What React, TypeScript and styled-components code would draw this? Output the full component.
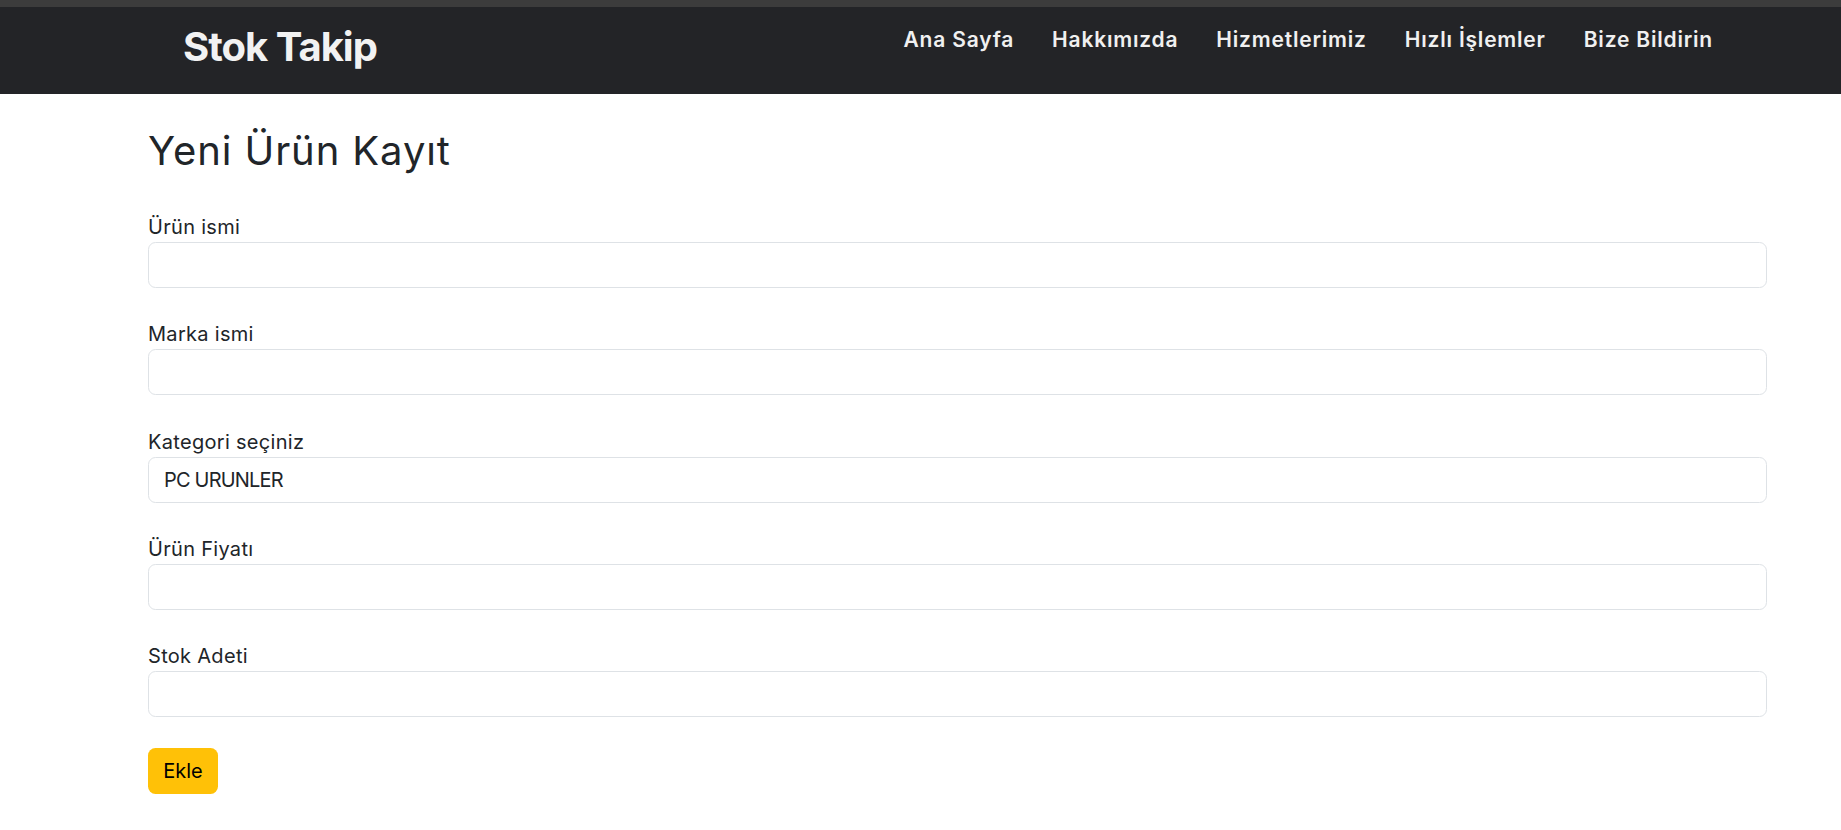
import React from 'react';
import styled, { createGlobalStyle } from 'styled-components';

const Global = createGlobalStyle`
  html, body { margin: 0; padding: 0; background: #ffffff; }
  body { font-family: Inter, "Open Sans", sans-serif; color: #212529; }
  * { box-sizing: border-box; }
`;

const TopStrip = styled.div`
  height: 7px;
  background: #3c3c3c;
`;

const Navbar = styled.nav`
  height: 87px;
  background: #232427;
  display: flex;
  align-items: flex-start;
  justify-content: space-between;
  padding: 0 128px 0 183px;
`;

const Brand = styled.a`
  display: block;
  padding-top: 20px;
  font-size: 40px;
  line-height: 40px;
  font-weight: 700;
  letter-spacing: -1px;
  color: #f2f2f2;
  text-decoration: none;
`;

const NavList = styled.ul`
  list-style: none;
  margin: 0;
  padding: 22px 0 0;
  display: flex;
  gap: 38px;
`;

const NavLink = styled.a`
  display: block;
  font-size: 21px;
  line-height: 21px;
  font-weight: 600;
  letter-spacing: 0.8px;
  color: #f0f0f0;
  text-decoration: none;
`;

const Main = styled.main`
  padding: 33px 74px 40px 148px;
`;

const Title = styled.h2`
  margin: 0 0 37px;
  font-size: 40px;
  line-height: 48px;
  font-weight: 400;
  letter-spacing: 0.9px;
  color: #212529;
`;

const Group = styled.div`
  margin-bottom: 31.25px;
`;

const Label = styled.label`
  display: block;
  font-size: 20px;
  line-height: 30px;
  letter-spacing: 0.3px;
  color: #212529;
`;

const fieldCss = `
  display: block;
  width: 100%;
  height: 46px;
  padding: 0 15px;
  border: 1px solid #dee2e6;
  border-radius: 7.5px;
  background: #ffffff;
  font-family: Inter, "Open Sans", sans-serif;
  font-size: 20px;
  letter-spacing: -0.8px;
  color: #212529;
  outline: none;
  appearance: none;
`;

const Input = styled.input`
  ${fieldCss}
`;

const Select = styled.select`
  ${fieldCss}
`;

const Button = styled.button`
  height: 46px;
  width: 70px;
  border: none;
  border-radius: 7.5px;
  background: #ffc107;
  color: #000000;
  font-family: Inter, "Open Sans", sans-serif;
  font-size: 20px;
  cursor: pointer;
`;

const links = ['Ana Sayfa', 'Hakkımızda', 'Hizmetlerimiz', 'Hızlı İşlemler', 'Bize Bildirin'];

const fields: { label: string; kind: 'input' | 'select' }[] = [
  { label: 'Ürün ismi', kind: 'input' },
  { label: 'Marka ismi', kind: 'input' },
  { label: 'Kategori seçiniz', kind: 'select' },
  { label: 'Ürün Fiyatı', kind: 'input' },
  { label: 'Stok Adeti', kind: 'input' },
];

export default function App() {
  return (
    <>
      <Global />
      <TopStrip />
      <Navbar>
        <Brand href="#">Stok Takip</Brand>
        <NavList>
          {links.map((l) => (
            <li key={l}>
              <NavLink href="#">{l}</NavLink>
            </li>
          ))}
        </NavList>
      </Navbar>
      <Main>
        <Title>Yeni Ürün Kayıt</Title>
        <form onSubmit={(e) => e.preventDefault()}>
          {fields.map((f, i) => (
            <Group key={f.label}>
              <Label htmlFor={`f${i}`}>{f.label}</Label>
              {f.kind === 'select' ? (
                <Select id={`f${i}`} defaultValue="pc">
                  <option value="pc">PC URUNLER</option>
                </Select>
              ) : (
                <Input id={`f${i}`} type="text" />
              )}
            </Group>
          ))}
          <Button type="submit">Ekle</Button>
        </form>
      </Main>
    </>
  );
}
